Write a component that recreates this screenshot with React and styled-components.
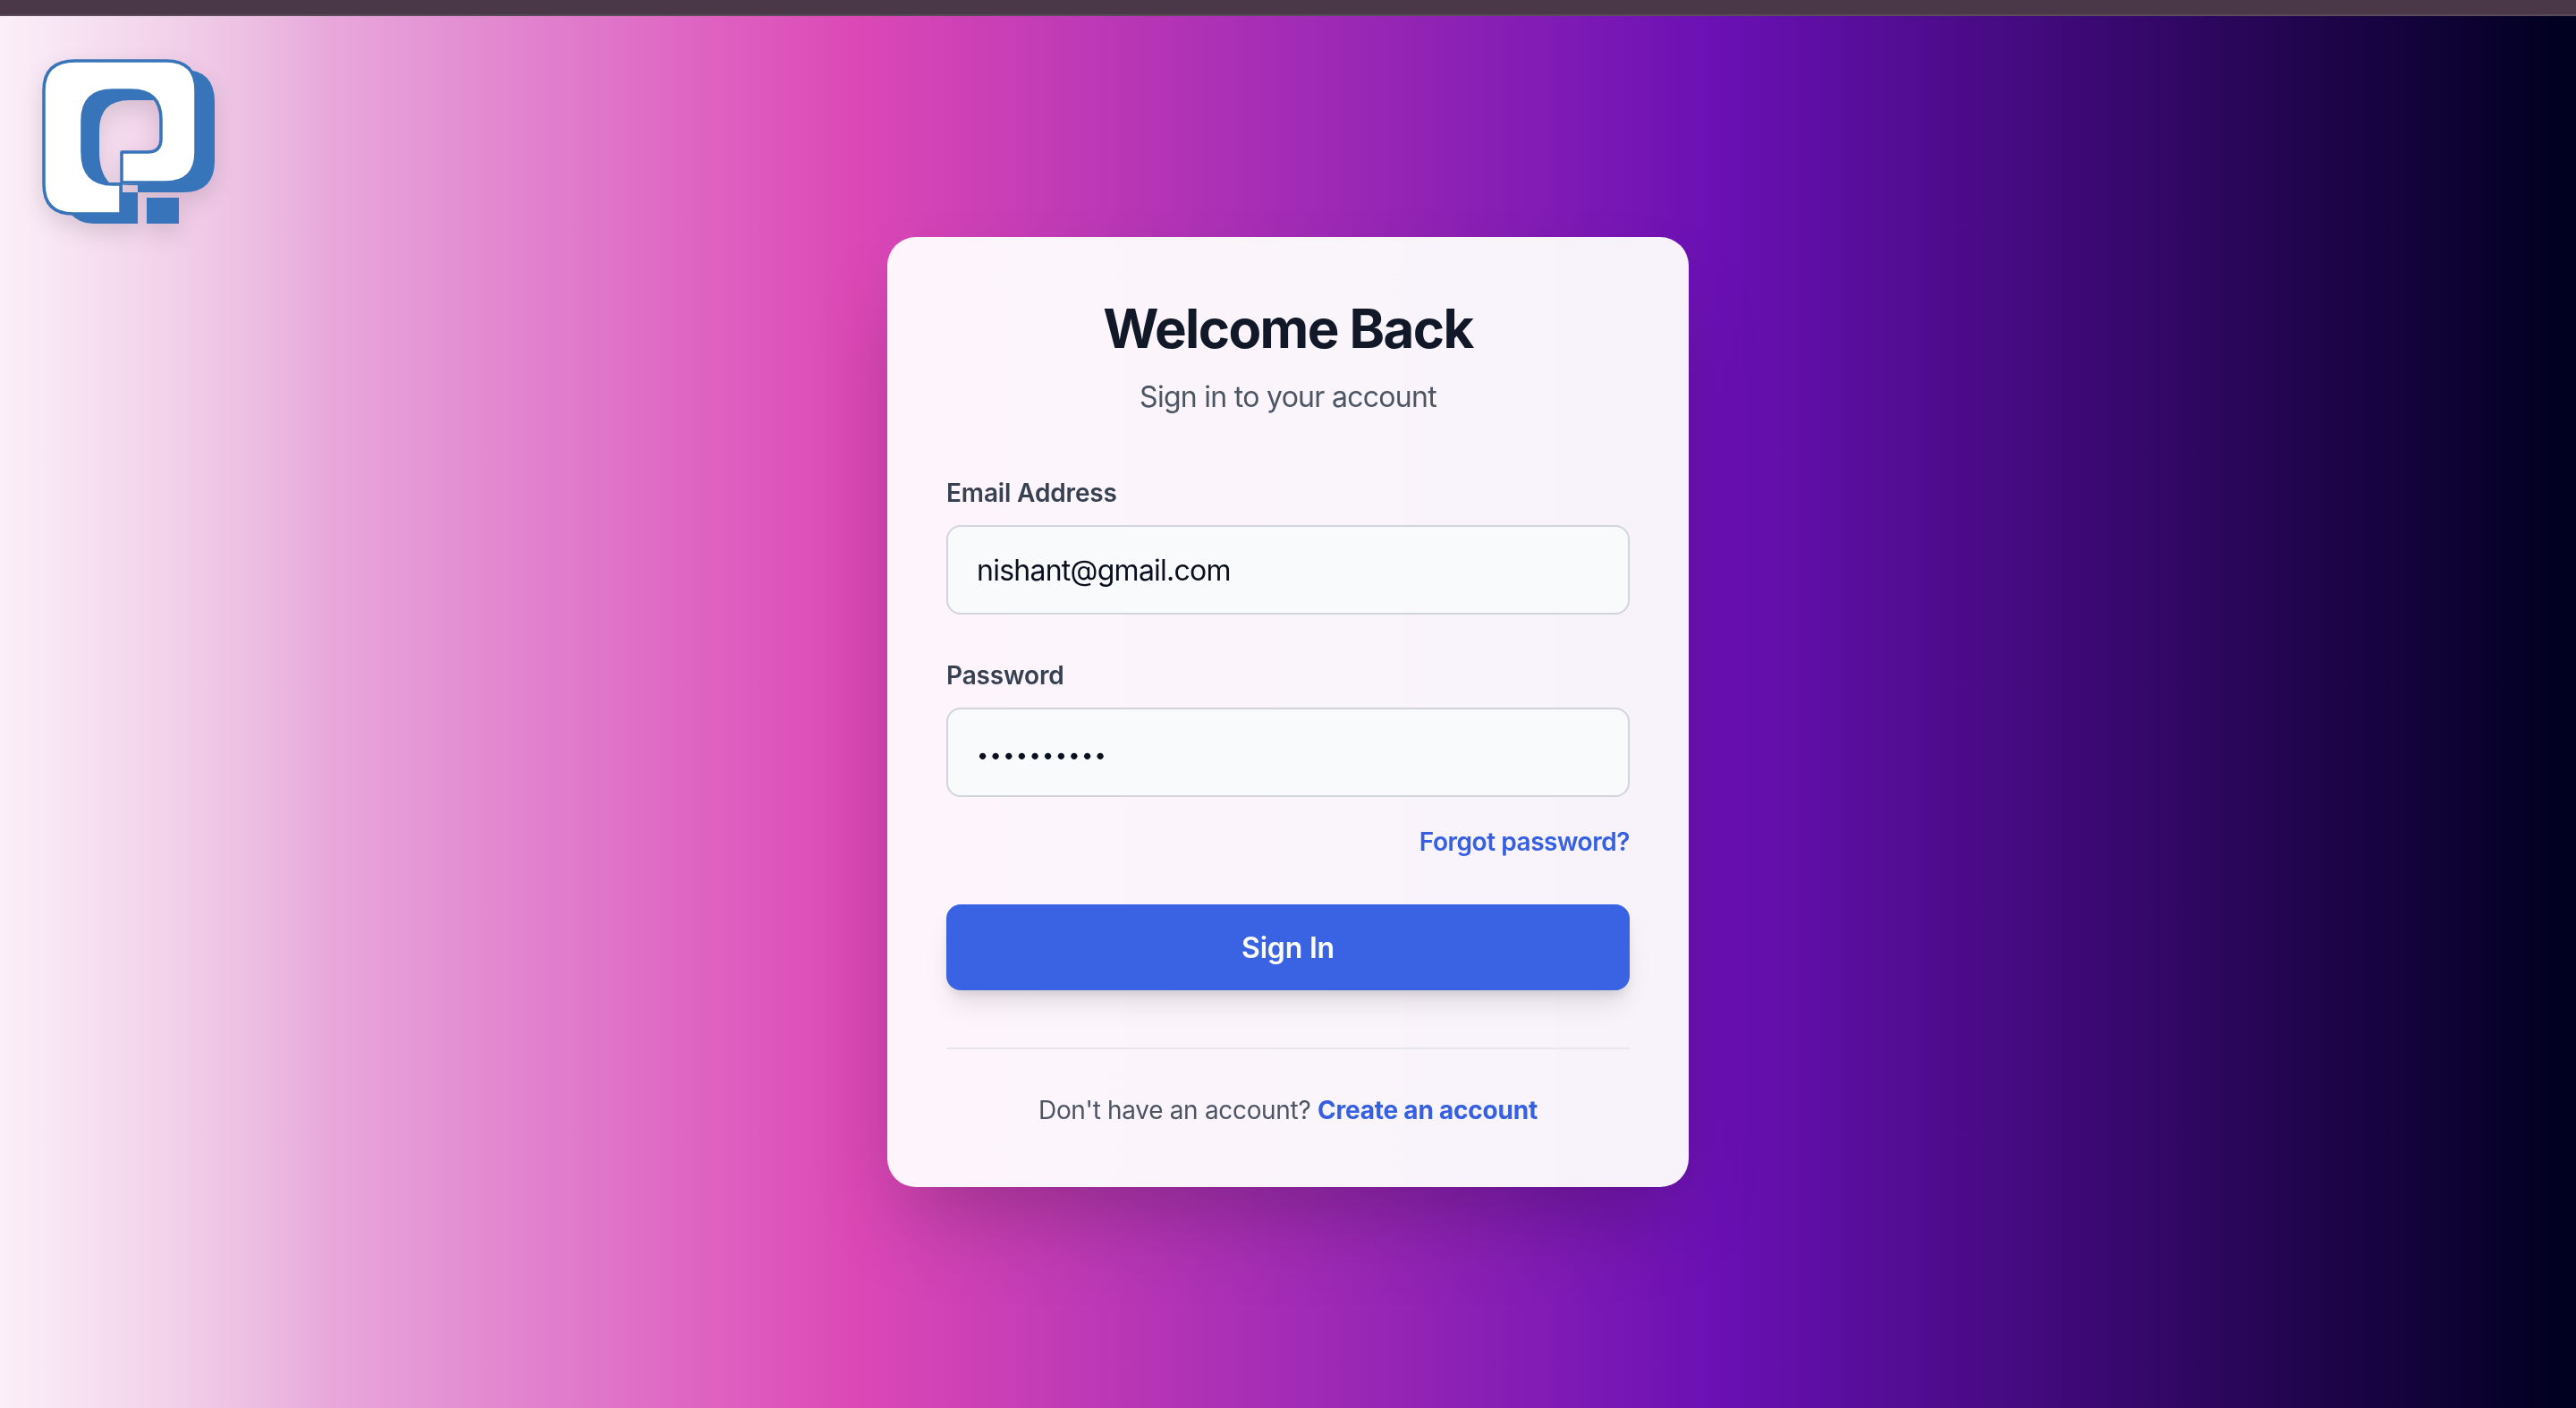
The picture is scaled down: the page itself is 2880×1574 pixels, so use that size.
import React from "react";
import styled, { createGlobalStyle } from "styled-components";

const Global = createGlobalStyle`
  * { box-sizing: border-box; }
  html, body { margin: 0; padding: 0; height: 100%; }
  body { font-family: Inter, "Liberation Sans", sans-serif; }
  #root { height: 100%; }
`;

const Page = styled.div`
  position: relative;
  width: 100%;
  height: 1574px;
  display: flex;
  flex-direction: column;
  overflow: hidden;
  background: linear-gradient(90deg, #fbeff9 0%, #f6dff0 3.8%, #edc2e3 9.3%, #e8a8db 12.7%, #e07acb 22.3%, #dc48b6 33.2%, #6a10b4 66.7%, #000020 99.5%);
`;

const TopBar = styled.div`
  flex: 0 0 18px;
  background: #4a3748;
  border-bottom: 2px solid #5b4a5a;
`;

const Main = styled.main`
  flex: 1;
  display: flex;
  align-items: center;
  justify-content: center;
`;

const LogoMark = styled.svg`
  position: absolute;
  left: 40px;
  top: 60px;
  width: 210px;
  height: 200px;
  filter: drop-shadow(0 10px 12px rgba(0, 0, 0, 0.12));
`;

const Card = styled.section`
  width: 896px;
  padding: 66px;
  border-radius: 32px;
  background: rgba(255, 255, 255, 0.95);
  backdrop-filter: blur(60px);
  box-shadow: 0 50px 100px -24px rgba(0, 0, 0, 0.25);
`;

const Title = styled.h1`
  margin: 0;
  font-size: 60px;
  line-height: 72px;
  font-weight: 700;
  letter-spacing: -1.6px;
  text-align: center;
  color: #111827;
`;

const Subtitle = styled.p`
  margin: 17px 0 0;
  font-size: 32px;
  line-height: 48px;
  letter-spacing: -0.72px;
  text-align: center;
  color: #4b5563;
`;

const Form = styled.form`
  margin-top: 63px;
  display: flex;
  flex-direction: column;
`;

const Field = styled.div`
  display: flex;
  flex-direction: column;
  gap: 16px;
  margin-bottom: ${(p) => p.$gap}px;
`;

const Label = styled.label`
  font-size: 28px;
  line-height: 40px;
  font-weight: 600;
  letter-spacing: -0.14px;
  color: #374151;
`;

const Input = styled.input`
  width: 100%;
  height: 100px;
  padding: 0 32px;
  border: 2px solid #d1d5db;
  border-radius: 16px;
  background: #f9fafb;
  font-family: inherit;
  font-size: 32px;
  letter-spacing: -0.75px;
  color: #0b1020;
  outline: none;
`;

const PasswordInput = styled(Input)`
  padding-top: 4px;
  font-size: 23.5px;
  letter-spacing: 1.4px;
`;

const ForgotRow = styled.div`
  display: flex;
  justify-content: flex-end;
  margin-top: 30px;
`;

const TextLink = styled.a`
  font-size: 28px;
  line-height: 40px;
  font-weight: ${(p) => p.$weight};
  letter-spacing: ${(p) => p.$track}px;
  color: #3560e2;
  text-decoration: none;
`;

const Submit = styled.button`
  width: 100%;
  height: 96px;
  margin-top: 50px;
  border: none;
  border-radius: 16px;
  background: #3a63e3;
  color: #fff;
  font-family: inherit;
  font-size: 32px;
  font-weight: 600;
  letter-spacing: -0.2px;
  box-shadow: 0 20px 30px -6px rgba(0, 0, 0, 0.1), 0 8px 12px -4px rgba(0, 0, 0, 0.1);
`;

const Footer = styled.div`
  margin-top: 64px;
  padding-top: 48px;
  border-top: 2px solid #e5e7eb;
  font-size: 28px;
  line-height: 40px;
  letter-spacing: -0.32px;
  text-align: center;
  color: #4b5563;
`;

function Logo() {
  return (
    <LogoMark viewBox="40 60 210 200" aria-hidden="true">
      <path
        fillRule="evenodd"
        fill="#3874b9"
        d="M190 78 H205 Q240 78 240 114 V180 Q240 215 205 215 H154 V250 H104 Q88 250 78 238 L70 150 L90 110 L120 92 Z
           M145 112 Q111 112 111 146 V170 Q111 192 122 204 H137 V207 H154 V215 H137 V207 H122 L190 204 V112 Z"
      />
      <rect x="164" y="221" width="36" height="29" fill="#3874b9" />
      <path
        fill="#fff"
        stroke="#3874b9"
        strokeWidth="3.5"
        strokeLinejoin="round"
        d="M84 68 H186 Q219 68 219 101 V170 Q219 204 185 204 H136 V170 H165 Q180 170 180 155 V134 Q180 101 147 101 H126 Q92 101 92 135 V170 Q92 206 126 206 H135 V239 H82 Q49 239 49 206 V101 Q49 68 84 68 Z"
      />
    </LogoMark>
  );
}

export default function App() {
  return (
    <Page>
      <Global />
      <TopBar />
      <Logo />
      <Main>
        <Card>
          <Title>Welcome Back</Title>
          <Subtitle>Sign in to your account</Subtitle>
          <Form onSubmit={(e) => e.preventDefault()}>
            <Field $gap={48}>
              <Label htmlFor="email">Email Address</Label>
              <Input id="email" type="email" defaultValue="nishant@gmail.com" />
            </Field>
            <Field $gap={0}>
              <Label htmlFor="password">Password</Label>
              <PasswordInput id="password" type="password" defaultValue="nishant123" />
            </Field>
            <ForgotRow>
              <TextLink href="#" $weight={600} $track={-0.46}>Forgot password?</TextLink>
            </ForgotRow>
            <Submit type="submit">Sign In</Submit>
          </Form>
          <Footer>
            Don't have an account? <TextLink href="#" $weight={700} $track={-0.22}>Create an account</TextLink>
          </Footer>
        </Card>
      </Main>
    </Page>
  );
}
